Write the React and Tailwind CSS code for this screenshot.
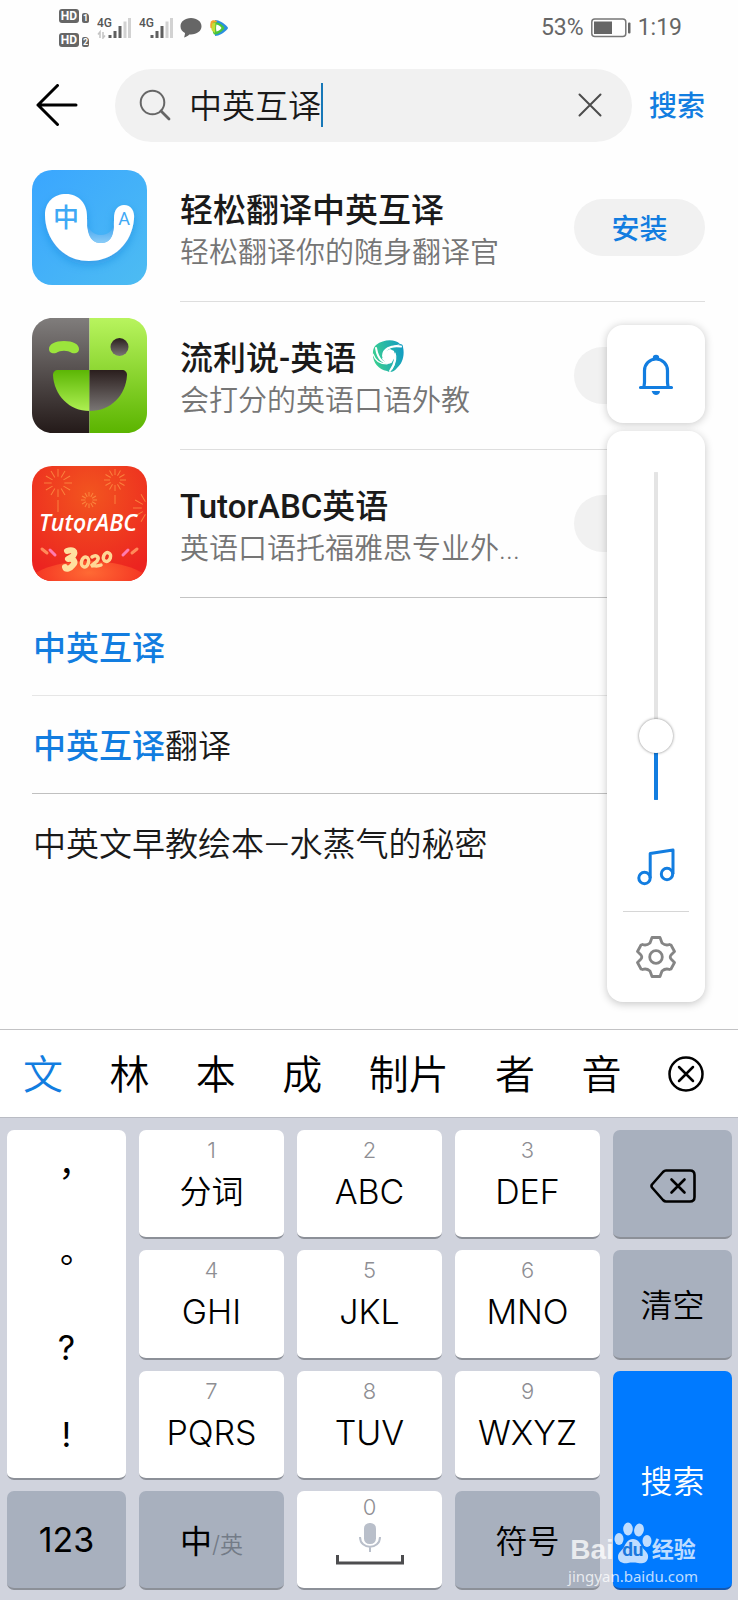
import { useState } from "react";
import clsx from "clsx";

const apps = [
  { name: "轻松翻译中英互译", desc: "轻松翻译你的随身翻译官", icon: TranslateLogo, line: "border-[#dedede]" },
  { name: "流利说-英语", desc: "会打分的英语口语外教", icon: FluentLogo, badge: true, line: "border-[#dedede]" },
  { name: "TutorABC英语", desc: "英语口语托福雅思专业外...", icon: TutorLogo, line: "border-[#c4c4c4]" },
];

const suggestions = [
  { match: "中英互译", rest: "", line: "border-b border-[#e6e6e6]" },
  { match: "中英互译", rest: "翻译", line: "border-b border-[#c0c0c0]" },
  { match: "", rest: "中英文早教绘本—水蒸气的秘密", line: "" },
];

const candidates = ["文", "林", "本", "成", "制片", "者", "音"];

const punctuation = ["，", "。", "?", "!"];

const letterKeys = [
  { num: "1", label: "分词", pos: "col-start-2 row-start-1" },
  { num: "2", label: "ABC", pos: "col-start-3 row-start-1" },
  { num: "3", label: "DEF", pos: "col-start-4 row-start-1" },
  { num: "4", label: "GHI", pos: "col-start-2 row-start-2" },
  { num: "5", label: "JKL", pos: "col-start-3 row-start-2" },
  { num: "6", label: "MNO", pos: "col-start-4 row-start-2" },
  { num: "7", label: "PQRS", pos: "col-start-2 row-start-3" },
  { num: "8", label: "TUV", pos: "col-start-3 row-start-3" },
  { num: "9", label: "WXYZ", pos: "col-start-4 row-start-3" },
];

export default function App() {
  const [query, setQuery] = useState("中英互译");

  return (
    <div className="relative min-h-screen flex flex-col bg-[#fefefe] font-['Roboto','Noto_Sans_CJK_SC',sans-serif] text-[#1a1a1a]">
      <StatusBar />
      <SearchBar query={query} setQuery={setQuery} />
      <main className="flex-1">
        {apps.map((app) => (
          <AppRow key={app.name} {...app} />
        ))}
        <ul className="pl-8 pr-[33px]">
          {suggestions.map((s) => (
            <li key={s.match + s.rest} className={clsx("h-[98px]", s.line)}>
              <a href="#" className="flex h-full items-center pt-1 pl-px text-[33px] font-[350]">
                {s.match && <span className="font-medium text-[#127de0]">{s.match}</span>}
                {s.rest}
              </a>
            </li>
          ))}
        </ul>
      </main>
      <Keyboard />
      <VolumePanel />
    </div>
  );
}

function StatusBar() {
  return (
    <header className="flex h-14 items-center justify-between pl-[59px] pr-14 text-[#666]">
      <div className="flex items-center">
        <div className="flex flex-col gap-[10px]">
          <HdBadge sim="1" />
          <HdBadge sim="2" />
        </div>
        <div className="ml-2 flex gap-2">
          <Signal arrows />
          <Signal />
        </div>
        <svg viewBox="0 0 22 22" className="ml-[7px] size-[22px]">
          <path fill="#666" d="M11 1C4.900 1 0.500 4.600 0.500 9.300c0 3 1.700 5.400 4.500 6.800-.1 1.800-.4 3-1 4.400 2.300-.6 4-1.800 5.300-3.100 7 .6 12.200-3 12.200-8.100C21.500 4.600 17.100 1 11 1z" />
        </svg>
        <svg viewBox="0 0 20 18" className="ml-[7px] h-[18px] w-5">
          <path fill="#2a8fe0" d="M6 1c4 0 9 3 12.500 7 .6.700.6 1.300 0 2C15 14 10 17 6 17z" />
          <path fill="#f3a42c" d="M2 2.500C3 1 6 1 8 2l-4 8-2.500-1C1 6 1.200 4 2 2.500z" />
          <path fill="#4ac53a" d="M4 4c2-2 8 0 11 4 .5.700.5 1.200 0 2-3 3.500-7 6-10 5.500C3 13 3 6 4 4z" />
          <path fill="#c7dc36" d="M3 4.500l3.500-1L6 14l-3.500-3z" />
          <path fill="#fff" d="M7.500 5.500c2 .5 4 1.800 5 3.500-1 1.700-3 3-5 3.500-.6-2.300-.6-4.700 0-7z" />
        </svg>
      </div>
      <div className="flex items-center text-[23px]">
        <span>53%</span>
        <svg viewBox="0 0 40 20" className="mx-[7px] h-5 w-10">
          <rect x="0.800" y="1" width="34" height="17.500" rx="3" fill="none" stroke="#777" strokeWidth="1.500" />
          <rect x="3" y="3.500" width="18" height="12.500" fill="#666" />
          <rect x="37" y="4.500" width="2.500" height="11" rx="1" fill="#666" />
        </svg>
        <span>1:19</span>
      </div>
    </header>
  );
}

function HdBadge({ sim }) {
  return (
    <div className="flex items-end gap-[3px] font-bold leading-none text-white">
      <span className="flex h-[14px] w-5 items-center justify-center rounded-[3px] bg-[#666] text-[12px]">HD</span>
      <span className="flex h-[10px] w-[7px] items-center justify-center rounded-[2px] rounded-tr-sm bg-[#666] text-[9px]">{sim}</span>
    </div>
  );
}

function Signal({ arrows }) {
  return (
    <svg viewBox="0 0 34 22" className="h-[22px] w-[34px]">
      <text x="0" y="10" fontSize="12" fontWeight="500" fill="#555" fontFamily="Roboto">4G</text>
      {arrows && <path d="M3 21v-6l-2 2.500M6 15v6l2-2.500" fill="none" stroke="#c4c4c4" strokeWidth="1.500" />}
      <path d="M13 21v-3M18 21v-7M23 21V9" stroke="#5f5f5f" strokeWidth="3" />
      <path d="M28 21V4.500M32.500 21V1" stroke="#d2d2d2" strokeWidth="3" />
    </svg>
  );
}

function SearchBar({ query, setQuery }) {
  return (
    <div className="flex h-[98px] items-center pl-[36px] pr-[33px]">
      <button aria-label="返回" className="shrink-0">
        <svg viewBox="0 0 42 42" className="size-[42px]" fill="none" stroke="#000" strokeWidth="3" strokeLinecap="round" strokeLinejoin="round">
          <path d="M21.500 1.500L2 21l19.500 19.500M2 21h38" />
        </svg>
      </button>
      <label className="ml-[37px] flex h-[73px] min-w-0 flex-1 items-center rounded-full bg-[#f1f1f1] pl-6 pr-[30px]">
        <svg viewBox="0 0 32 32" className="size-8 shrink-0" fill="none" stroke="#666" strokeLinecap="round">
          <circle cx="13.500" cy="13.500" r="11.800" strokeWidth="2" />
          <path d="M22 22l8 8" strokeWidth="2.800" />
        </svg>
        <input
          aria-label="搜索应用"
          value={query}
          onChange={(e) => setQuery(e.target.value)}
          className="field-sizing-content ml-[18px] min-w-0 bg-transparent pt-[3px] text-[33px] font-[350] outline-none"
        />
        <span className="h-11 w-[2px] shrink-0 bg-[#1778b8]" />
        <button aria-label="清除" onClick={() => setQuery("")} className="ml-auto shrink-0">
          <svg viewBox="0 0 24 24" className="size-6" fill="none" stroke="#4c4c4c" strokeWidth="2" strokeLinecap="round">
            <path d="M1.500 1.500l21 21M22.500 1.500l-21 21" />
          </svg>
        </button>
      </label>
      <button className="ml-[17px] shrink-0 pt-1 text-[28px] font-medium text-[#127de0]">搜索</button>
    </div>
  );
}

function AppRow({ name, desc, icon: Icon, badge, line }) {
  return (
    <div className="flex h-37 gap-[33px] pl-8 pr-[33px]">
      <div className="pt-4">
        <Icon />
      </div>
      <div className={clsx("flex h-full min-w-0 flex-1 items-center justify-between border-b", line)}>
        <div className="min-w-0 pt-2">
          <div className="flex items-center gap-4 text-[33px] leading-[42px] font-medium">
            {name}
            {badge && <SwirlBadge />}
          </div>
          <div className="truncate text-[29px] leading-[42px] font-[350] text-[#757575]">{desc}</div>
        </div>
        <button className="h-[57px] w-[131px] shrink-0 rounded-full bg-[#f1f1f1] pt-1 text-[28px] font-medium text-[#127de0]">安装</button>
      </div>
    </div>
  );
}

function SwirlBadge() {
  return (
    <svg viewBox="0 0 32 33" className="mb-1 h-[33px] w-8" fill="none">
      <defs>
        <linearGradient id="swirl" x1="0" y1="0.600" x2="1" y2="0.400">
          <stop offset="0" stopColor="#3ad08f" />
          <stop offset="1" stopColor="#139cc2" />
        </linearGradient>
      </defs>
      <path fill="url(#swirl)" d="M4 5C12-1 23-1 28 4c2 0 3 1 3 3 2 9-1 17-6 21-3 4-7 5-10 3C6 29 0 22 1 12c0-3 1-5 3-7z" />
      <path fill="#fff" d="M12 12l6-3 4 2 1 6-3 5-6 1-4-4z" />
      <g stroke="#fff" strokeLinecap="round">
        <path strokeWidth="2" d="M11 16c0-7 7-11 18-9.500" />
        <path strokeWidth="1.200" d="M13 12c3-4 8-6 14-7" />
        <path strokeWidth="2" d="M20 12c5 4 3 12-2 19" />
        <path strokeWidth="1.200" d="M23 13c2 5 0 11-3 16" />
        <path strokeWidth="2" d="M19 22c-7 3-13-2-15-14" />
        <path strokeWidth="1.200" d="M15 24c-7 0-12-4-14-10" />
      </g>
    </svg>
  );
}

function TranslateLogo() {
  return (
    <svg viewBox="0 0 115 115" className="size-[115px] shrink-0">
      <defs>
        <linearGradient id="tr-bg" x1="0" y1="0" x2="1" y2="1">
          <stop offset="0" stopColor="#3aa6ff" />
          <stop offset="1" stopColor="#4dbcf2" />
        </linearGradient>
        <linearGradient id="tr-in" x1="0" y1="0" x2="0" y2="1">
          <stop offset="0.300" stopColor="#3ea2ee" />
          <stop offset="1" stopColor="#8ccdf8" />
        </linearGradient>
        <filter id="tr-sh" x="-20%" y="-20%" width="140%" height="150%">
          <feDropShadow dx="0" dy="4" stdDeviation="5" floodColor="#1c7fd6" floodOpacity="0.450" />
        </filter>
      </defs>
      <rect width="115" height="115" rx="20" fill="url(#tr-bg)" />
      <path filter="url(#tr-sh)" fill="#fff" d="M13 45C13 32 22 24 34 24c13 0 21 10 21 22 0 14 2 27 14 27s13-12 13-25c0-8 4-13 10-13 7 0 11 6 10 14-2 24-20 42-45 42C29 91 13 67 13 45z" />
      <path fill="url(#tr-in)" d="M55 48c0 14 2 25 14 25s13-11 13-22c0 8-5 14-13 14-9 0-14-7-14-17z" />
      <text x="34" y="57" fontSize="26" fontWeight="500" fill="#3fa9f5" textAnchor="middle" fontFamily="Noto Sans CJK SC">中</text>
      <text x="92" y="55" fontSize="18" fill="#3fa9f5" textAnchor="middle" fontFamily="Roboto">A</text>
    </svg>
  );
}

function FluentLogo() {
  return (
    <svg viewBox="0 0 115 115" className="size-[115px] shrink-0">
      <defs>
        <linearGradient id="fl-dark" x1="0" y1="0" x2="0" y2="1">
          <stop offset="0" stopColor="#807d7c" />
          <stop offset="1" stopColor="#241a19" />
        </linearGradient>
        <linearGradient id="fl-green" x1="0" y1="0" x2="0" y2="1">
          <stop offset="0" stopColor="#b8f45e" />
          <stop offset="1" stopColor="#5bb400" />
        </linearGradient>
        <linearGradient id="fl-dark-up" x1="0" y1="0" x2="0" y2="1">
          <stop offset="0" stopColor="#2a1e1d" />
          <stop offset="1" stopColor="#7a7675" />
        </linearGradient>
        <linearGradient id="fl-green-up" x1="0" y1="0" x2="0" y2="1">
          <stop offset="0" stopColor="#5cb605" />
          <stop offset="1" stopColor="#aef052" />
        </linearGradient>
      </defs>
      <path fill="url(#fl-dark)" d="M20 0h37.500v115H20C9 115 0 106 0 95V20C0 9 9 0 20 0z" />
      <path fill="url(#fl-green)" d="M57.500 0H95c11 0 20 9 20 20v75c0 11-9 20-20 20H57.500z" />
      <path fill="#9be43c" d="M17 31c0-5 6-8 15-8s15 3 15 8c0 4-4 5-7 4-5-3-11-3-16 0-3 1-7 0-7-4z" />
      <circle cx="87.500" cy="29" r="9" fill="url(#fl-dark-up)" />
      <path fill="url(#fl-green-up)" d="M57.500 52H26c-3 0-5 2-5 5 1 20 16 36 36.500 36z" />
      <path fill="url(#fl-dark-up)" d="M57.500 52H90c3 0 5 2 5 5-1 20-16 36-37.500 36z" />
    </svg>
  );
}

// short rays arranged round a centre
function Firework({ x, y, r }) {
  return (
    <g stroke="#ff9c4a" strokeWidth="1" opacity="0.700" transform={`translate(${x} ${y})`}>
      {[0, 30, 60, 90, 120, 150, 180, 210, 240, 270, 300, 330].map((a) => (
        <path key={a} d={`M0 ${r * 0.450}V${r}`} transform={`rotate(${a})`} />
      ))}
    </g>
  );
}

function TutorLogo() {
  return (
    <svg viewBox="0 0 115 115" className="size-[115px] shrink-0">
      <defs>
        <radialGradient id="tu-bg" cx="0.500" cy="0.250" r="0.750">
          <stop offset="0" stopColor="#f2551f" />
          <stop offset="1" stopColor="#ec2420" />
        </radialGradient>
        <radialGradient id="tu-hill" cx="0.500" cy="0.200" r="0.600">
          <stop offset="0" stopColor="#ff6a34" />
          <stop offset="1" stopColor="#f0201c" />
        </radialGradient>
        <clipPath id="tu-clip">
          <rect width="115" height="115" rx="20" />
        </clipPath>
      </defs>
      <g clipPath="url(#tu-clip)">
        <rect width="115" height="115" fill="url(#tu-bg)" />
        <ellipse cx="57" cy="124" rx="66" ry="29" fill="url(#tu-hill)" />
        <Firework x={26} y={17} r={14} />
        <Firework x={83} y={14} r={11} />
        <Firework x={57} y={34} r={8} />
        <Firework x={117} y={42} r={16} />
        <path stroke="#ff9c4a" strokeWidth="1" opacity="0.700" d="M26 34v12M83 29v9" />
        <text x="7" y="65" fontSize="23" fontWeight="600" fontStyle="italic" fill="#fff" fontFamily="Open Sans">TutorABC</text>
        <circle cx="47" cy="65" r="2" fill="#fff" />
        <g strokeWidth="3" strokeLinecap="round">
          <path stroke="#ff8a5a" d="M10 83l5 4M105 83l-5 4" />
          <path stroke="#ff7bb0" d="M18 84l5 5M96 84l-5 5" />
        </g>
        <path fill="none" stroke="#ffe0a0" strokeWidth="6" strokeLinecap="round" strokeLinejoin="round" d="M35 85c5-2 10 0 6 5l-5 3c6-1 8 3 5 6-3 4-7 5-8 2" />
        <g fill="none" stroke="#ffd795" strokeWidth="3.500" strokeLinecap="round">
          <ellipse cx="53" cy="96" rx="3.500" ry="5" transform="rotate(15 53 96)" />
          <path d="M60 91c4-3 8 0 5 4l-6 5c3-1 6 1 10-1" />
          <ellipse cx="75" cy="91" rx="3.500" ry="4.500" transform="rotate(20 75 91)" />
        </g>
      </g>
    </svg>
  );
}

function VolumePanel() {
  const [volume, setVolume] = useState(16);

  return (
    <aside className="absolute right-[33px] top-[325px] flex w-[98px] flex-col gap-2">
      <button aria-label="响铃" className="flex h-[98px] items-center justify-center rounded-2xl bg-white shadow-[0_1px_8px_rgba(0,0,0,0.22)]">
        <svg viewBox="0 0 36 42" className="h-[42px] w-9" fill="none" stroke="#127de0" strokeWidth="3.200" strokeLinecap="round" strokeLinejoin="round">
          <path d="M2.500 34.500h31M6 34c0-2 .5-3 .5-5V17.500a11.500 11.500 0 0 1 23 0V29c0 2 .5 3 .5 5" />
          <path d="M15.500 5a2.500 2.500 0 0 1 5 0z" fill="#127de0" strokeWidth="1.500" />
          <path d="M14.500 38.500h7a3.500 3 0 0 1-7 0z" fill="#127de0" strokeWidth="1" />
        </svg>
      </button>
      <div className="flex flex-col items-center rounded-2xl bg-white pt-[41px] pb-6 shadow-[0_2px_8px_rgba(0,0,0,0.22)]">
        <input
          type="range"
          aria-label="媒体音量"
          value={volume}
          onChange={(e) => setVolume(Number(e.target.value))}
          className="h-[328px] w-[34px] appearance-none rounded-full bg-[length:4px_100%] bg-center bg-no-repeat [direction:rtl] [writing-mode:vertical-lr] [&::-webkit-slider-thumb]:size-[34px] [&::-webkit-slider-thumb]:appearance-none [&::-webkit-slider-thumb]:rounded-full [&::-webkit-slider-thumb]:bg-white [&::-webkit-slider-thumb]:shadow-[0_0_3px_rgba(0,0,0,0.5)]"
          style={{ backgroundImage: `linear-gradient(to top, #127de0 ${volume + 4}%, #e4e4e4 ${volume + 4}%)` }}
        />
        <button aria-label="音乐" className="mt-12">
          <svg viewBox="0 0 38 38" className="size-[38px]" fill="none" stroke="#127de0" strokeWidth="3" strokeLinejoin="round">
            <circle cx="7.500" cy="30" r="5.700" />
            <circle cx="30" cy="26" r="5.700" />
            <path d="M13.200 30V5.500L36 2v24" />
          </svg>
        </button>
        <hr className="mt-[25px] w-[66px] border-[#d6d6d6]" />
        <button aria-label="设置" className="mt-6">
          <svg viewBox="0 0 40 42" className="h-[42px] w-10" fill="none" stroke="#858585" strokeWidth="2.800" strokeLinejoin="round">
            <circle cx="20" cy="21" r="6.300" />
            <path d="M16 1.500h8l2 5.500q3.500 3 7.500 1.500l1.500.5 3.500 6.500-3.500 3.500q-1.500 2 0 4l3.500 3.500-3.500 6.500-1.500.5q-4-1.500-7.500 1.500l-2 5.500h-8l-2-5.500q-3.500-3-7.500-1.500l-1.500-.5-3.500-6.500 3.500-3.500q1.500-2 0-4L1.500 15.500 5 9l1.500-.5Q10.500 10 14 7z" />
          </svg>
        </button>
      </div>
    </aside>
  );
}

const keyBase = "flex justify-center rounded-[7px] border-b-2 border-[#8c9098] text-black";
const wordKey = "items-center pt-1 text-[32px] font-[350]";

function Keyboard() {
  return (
    <section className="relative">
      <div className="flex h-[88px] items-center justify-between border-t border-[#c2c2c4] bg-white pl-[23px] pr-[34px] text-[40px] font-[350] text-black">
        {candidates.map((c, i) => (
          <button key={c} className={clsx("pt-1", i === 0 && "text-[#127de0]")}>{c}</button>
        ))}
        <button aria-label="关闭候选">
          <svg viewBox="0 0 36 36" className="size-9" fill="none" stroke="#000" strokeWidth="2.500" strokeLinecap="round">
            <circle cx="18" cy="18" r="16.500" />
            <path d="M11 11l14 14M25 11L11 25" />
          </svg>
        </button>
      </div>

      <div className="grid grid-cols-[119fr_145fr_145fr_145fr_119fr] grid-rows-[109px_110px_109px_99px] gap-x-[13px] gap-y-[11px] border-t border-[#b9bcc4] bg-[#d0d3dd] pl-[7px] pr-[6px] pt-3 pb-[10px] font-['Inter','Noto_Sans_CJK_SC',sans-serif]">
        <div className={clsx(keyBase, "col-start-1 row-span-3 row-start-1 flex-col bg-white font-['Inter','Noto_Sans_CJK_TC',sans-serif] text-[34px]")}>
          {punctuation.map((p) => (
            <button key={p} className="w-full flex-1">{p}</button>
          ))}
        </div>

        {letterKeys.map((k) => (
          <button key={k.num} className={clsx(keyBase, "flex-col items-center bg-white pb-[14px]", k.pos)}>
            <span className="text-[22px] leading-7 font-light text-[#8e8e93]">{k.num}</span>
            <span className={clsx("mt-[2px] leading-[52px] font-[350]", k.num === "1" ? "text-[32px]" : "text-[34px]")}>{k.label}</span>
          </button>
        ))}

        <button aria-label="删除" className={clsx(keyBase, wordKey, "col-start-5 row-start-1 bg-[#a8b0be]")}>
          <svg viewBox="0 0 46 34" className="h-[34px] w-[46px]" fill="none" stroke="#000" strokeWidth="2.600" strokeLinecap="round" strokeLinejoin="round">
            <path d="M16 1.500h24q4.500 0 4.500 4.500v22q0 4.500-4.500 4.500H16q-1.500 0-3-1.500L2 18.500q-1-1.500 0-3L13 3q1.500-1.500 3-1.500z" />
            <path d="M21.500 10.500l13 13M34.500 10.500l-13 13" />
          </svg>
        </button>
        <button className={clsx(keyBase, wordKey, "col-start-5 row-start-2 bg-[#a8b0be]")}>清空</button>
        <button className={clsx(keyBase, wordKey, "col-start-5 row-span-2 row-start-3 border-[#1558b0] bg-[#007aff] text-white")}>
          搜索
        </button>

        <button className={clsx(keyBase, "col-start-1 row-start-4 items-center bg-[#a8b0be] text-[34px]")}>123</button>
        <button className={clsx(keyBase, wordKey, "col-start-2 row-start-4 bg-[#a8b0be]")}>
          <span>
            <span className="font-normal">中</span>
            <span className="text-[23px] text-[#737b87]">/英</span>
          </span>
        </button>
        <button aria-label="空格" className={clsx(keyBase, "col-start-3 row-start-4 bg-white")}>
          <span className="flex h-full flex-col items-center">
            <span className="text-[22px] leading-8 font-light text-[#8e8e93]">0</span>
            <svg viewBox="0 0 68 44" className="h-11 w-[68px]" fill="none">
              <rect x="28" y="0" width="12" height="21" rx="5.500" fill="#b9bfca" />
              <path d="M24 14c0 13 20 13 20 0M34 24v5" stroke="#b9bfca" strokeWidth="2" />
              <path d="M1.500 32v8h65v-8" stroke="#4d4d4f" strokeWidth="3" />
            </svg>
          </span>
        </button>
        <button className={clsx(keyBase, wordKey, "col-start-4 row-start-4 bg-[#a8b0be]")}>符号</button>
      </div>

      <Watermark />
    </section>
  );
}

function Watermark() {
  return (
    <div className="pointer-events-none absolute right-10 bottom-[14px] flex flex-col items-center gap-[2px] text-white/75">
      <div className="flex items-end font-bold">
        <span className="font-['Liberation_Sans',sans-serif] text-[28px] leading-7">Bai</span>
        <div className="relative">
          <svg viewBox="0 0 38 42" className="h-[42px] w-[38px]" fill="#fff" fillOpacity="0.750">
            <ellipse cx="5" cy="17" rx="4.500" ry="6" />
            <ellipse cx="14" cy="7" rx="4.800" ry="6.500" />
            <ellipse cx="25" cy="8" rx="4.800" ry="6.500" transform="rotate(12 25 8)" />
            <ellipse cx="33" cy="19" rx="4.500" ry="6" />
            <path d="M19 17c5 0 7 4 9 8 3 4 7 6 6 11-1 5-6 6-10 5-4-.6-7-.6-10 0-5 1-10-1-10-6s4-6 6-10c2-4 4-8 9-8z" />
          </svg>
          <span className="absolute inset-x-0 bottom-1 text-center text-[19px] leading-5 text-[#1b78dd]">du</span>
        </div>
        <span className="text-[22px] leading-7">经验</span>
      </div>
      <span className="font-['Noto_Sans',sans-serif] text-[15px] leading-5 font-normal">jingyan.baidu.com</span>
    </div>
  );
}
